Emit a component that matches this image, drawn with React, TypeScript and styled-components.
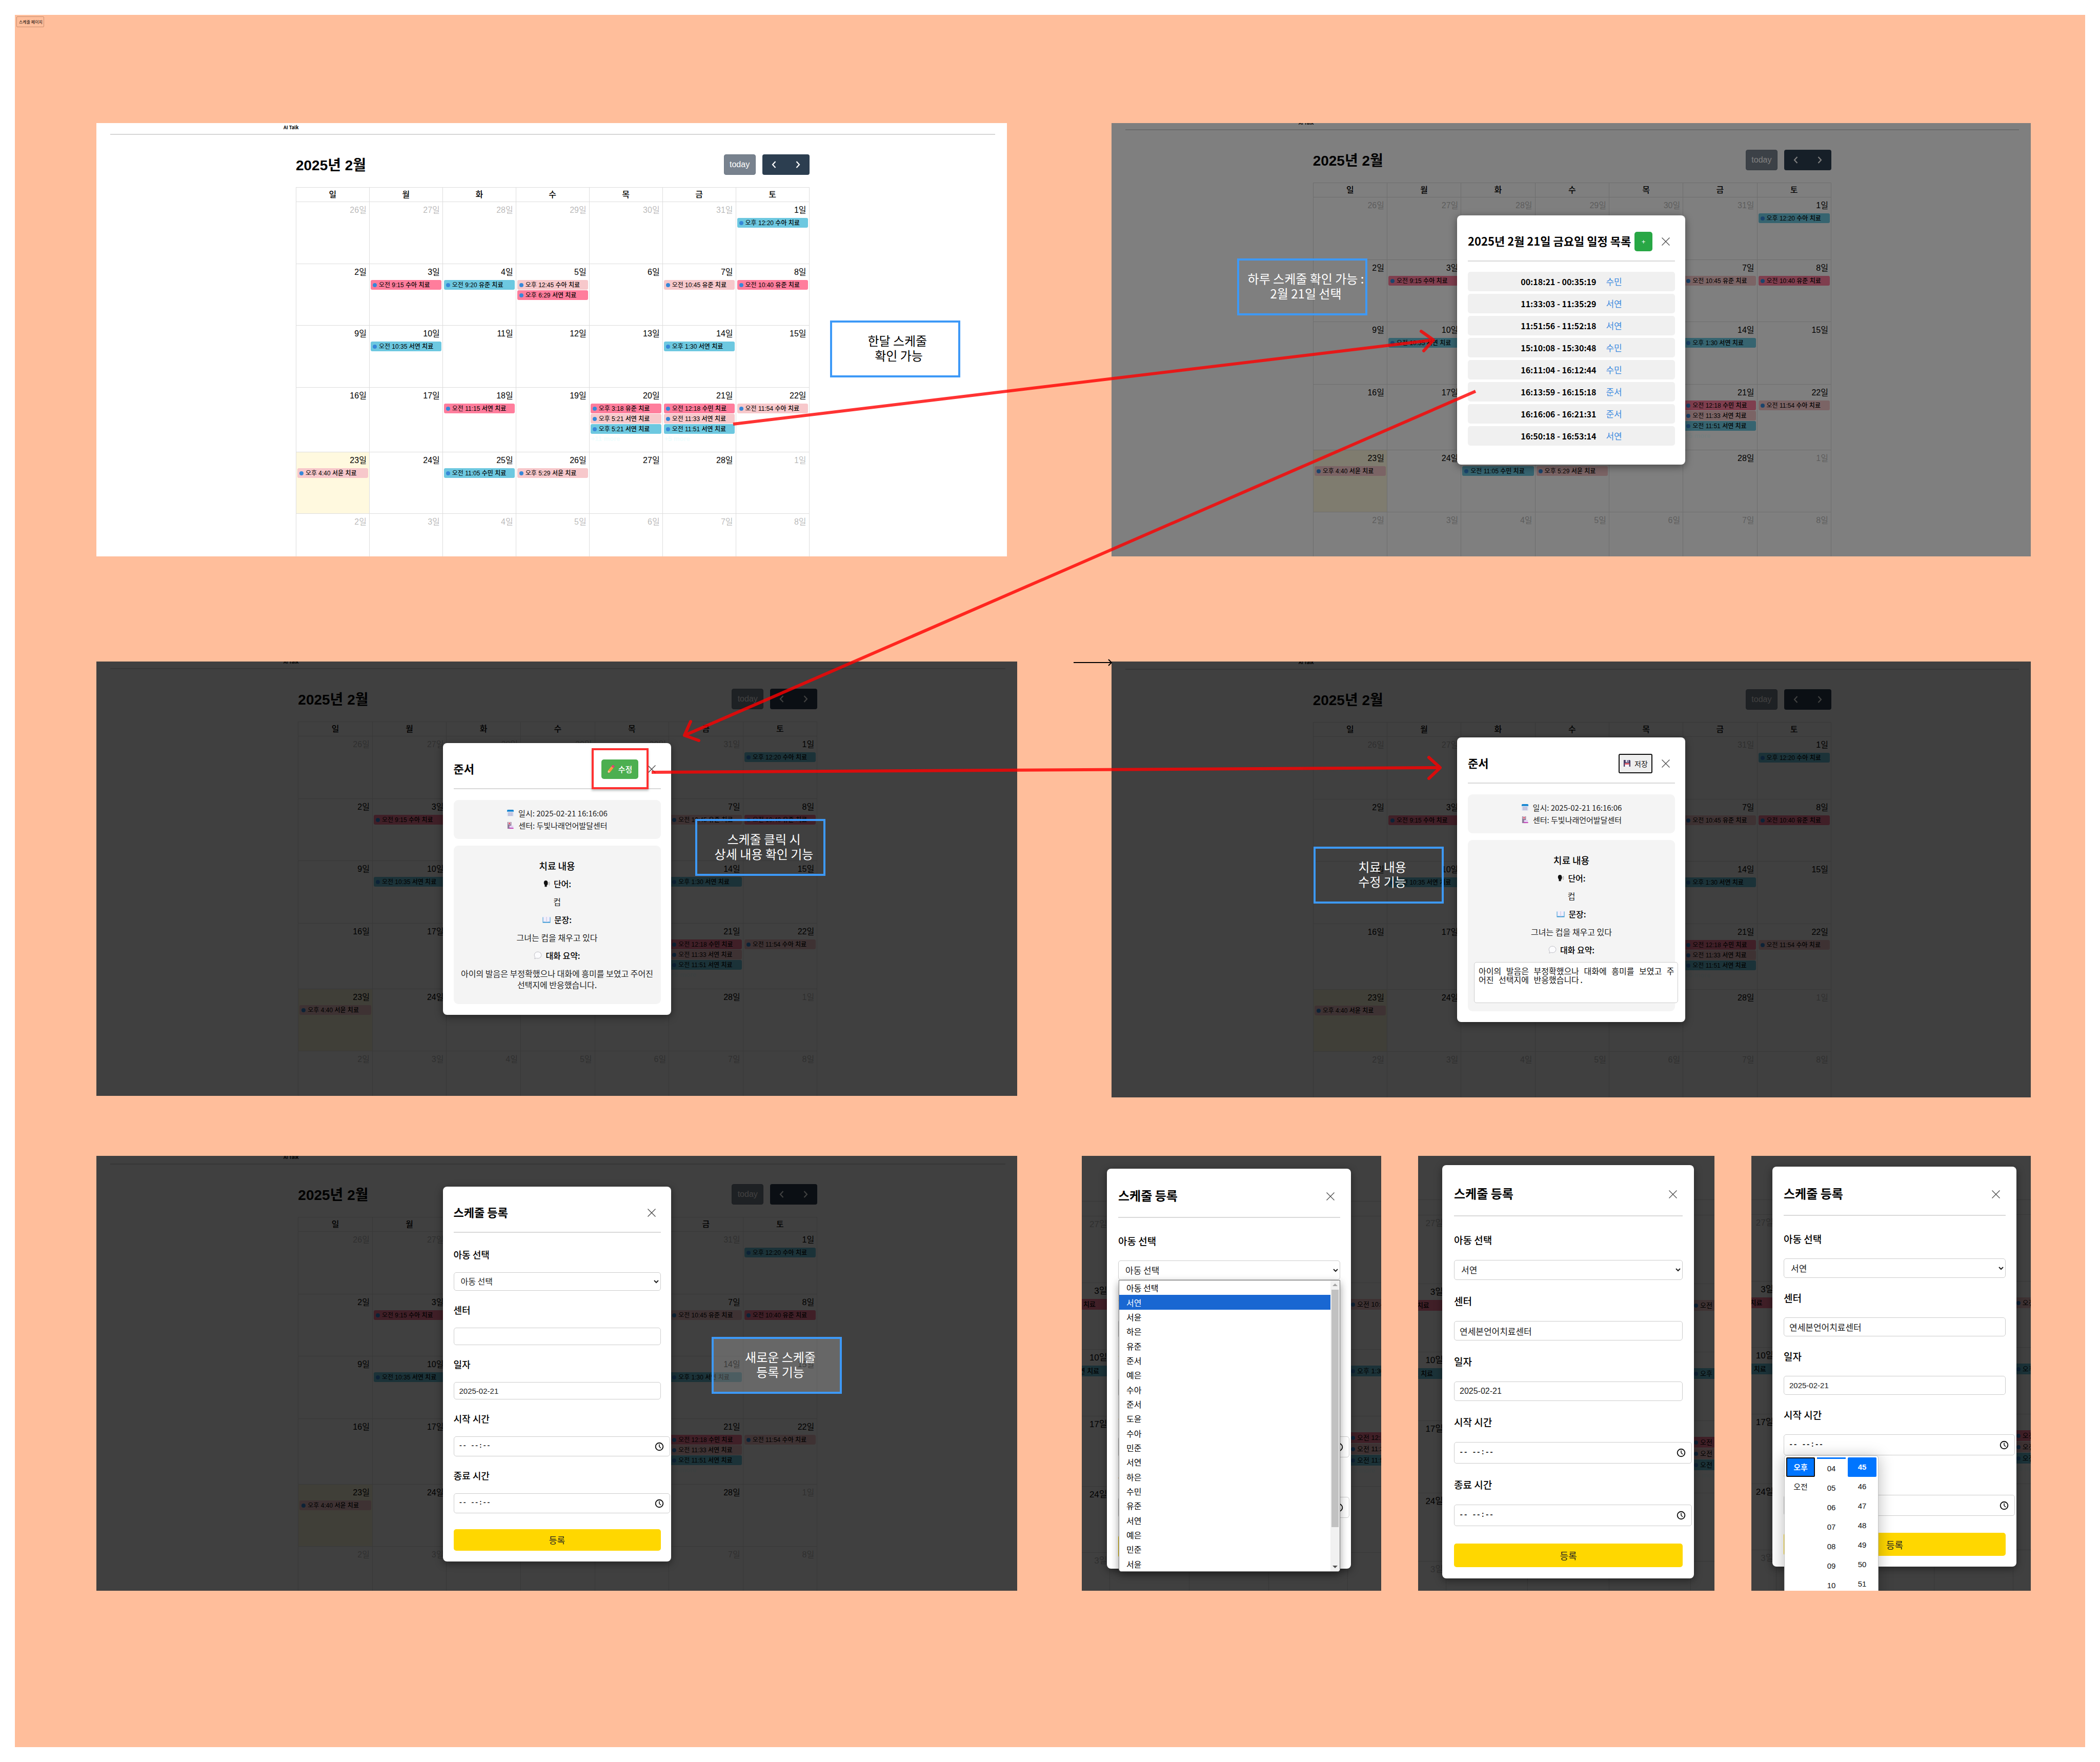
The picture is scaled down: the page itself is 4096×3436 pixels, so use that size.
import React, { useId } from "react";
import styled, { createGlobalStyle, css } from "styled-components";

const KR = `"Noto Sans CJK KR", "Noto Sans", sans-serif`;
const ARIAL = `"Liberation Sans", "Noto Sans CJK KR", sans-serif`;
const MONO = `"Liberation Mono", "Noto Sans CJK KR", monospace`;

const GlobalStyle = createGlobalStyle`
  *, *::before, *::after { box-sizing: border-box; }
  body { margin: 0; background: #fff; color: #000; font-family: ${KR}; }
  button, input, select, textarea { font-family: inherit; margin: 0; }
`;

/* ---------- board ---------- */

const Page = styled.div`
  position: relative;
  padding: 29px;
`;

const Board = styled.main`
  background: #ffbe9b;
  padding: 3px 0 0 3px;
`;

const BoardTag = styled.div`
  width: fit-content;
  height: 21px;
  padding: 0 2px 0 4px;
  border: 1px solid rgba(60, 20, 0, 0.28);
  border-radius: 2px;
  font-size: 8px;
  line-height: 19px;
`;

const Rows = styled.div`
  padding: 187px 106px 305px 156px;
`;

const Row = styled.section<{ $gapAfter?: number }>`
  display: flex;
  align-items: flex-start;
  margin-bottom: ${(p) => p.$gapAfter ?? 0}px;
`;

const Panel = styled.article<{ $grow: number; $height: number; $before?: number }>`
  position: relative;
  flex: ${(p) => p.$grow} 1 0;
  min-width: 0;
  height: ${(p) => p.$height}px;
  margin-left: ${(p) => p.$before ?? 0}px;
  overflow: hidden;
  background: #fff;
`;

const Overlay = styled.div<{ $dim: number; $pad?: string; $start?: boolean }>`
  position: absolute;
  inset: 0;
  display: flex;
  align-items: ${(p) => (p.$start ? "flex-start" : "center")};
  justify-content: ${(p) => (p.$start ? "flex-start" : "center")};
  padding: ${(p) => p.$pad ?? "0"};
  background: rgba(0, 0, 0, ${(p) => p.$dim});
`;

const Note = styled.p<{ $x: number; $y: number; $ink: string; $fill?: string }>`
  position: absolute;
  left: ${(p) => p.$x}px;
  top: ${(p) => p.$y}px;
  display: grid;
  place-content: center;
  width: 254px;
  height: 111px;
  margin: 0;
  padding: 0 0 6px 14px;
  border: 4px solid #3d99f7;
  background: ${(p) => p.$fill ?? "transparent"};
  color: ${(p) => p.$ink};
  font-size: 24px;
  line-height: 29px;
  text-align: center;
  white-space: pre;
`;

const Arrows = styled.svg`
  position: absolute;
  left: 0;
  top: 0;
  width: 100%;
  height: auto;
  pointer-events: none;
`;

/* ---------- calendar ---------- */

type Scale = {
  head: number;
  rows: number[];
  chip: number;
  day: number;
  text: number;
  width: string;
  left: string;
};

const LAST = 140;
const wide = { day: 16, text: 12, width: "56.4%", left: "21.9%", chip: 19 };
const BASE: Scale = { ...wide, head: 28, rows: [121, 120, 121, 126, 120, LAST] };
const DIM: Scale = { ...wide, head: 28, rows: [122, 121, 122, 128, 121, LAST] };
const CROP_A: Scale = { head: 29, rows: [130, 130, 130, 137, 129, LAST], chip: 21, day: 17, text: 13, width: "185.4%", left: "-43.6%" };
const CROP_B: Scale = { head: 30, rows: [134, 133, 134, 141, 133, LAST], chip: 21, day: 17, text: 13, width: "192.8%", left: "-45.7%" };
const CROP_C: Scale = { head: 29, rows: [130, 129, 130, 136, 129, LAST], chip: 21, day: 17, text: 13, width: "197.8%", left: "-47.6%" };

const Screen = styled.div<{ $shift: number }>`
  margin-top: ${(p) => -p.$shift}px;
`;

const AppBar = styled.header`
  height: 23px;
  margin: 0 23px 0 27px;
  padding: 4px 0 0 338px;
  border-bottom: 2px solid #d6d6d6;
  font-size: 9px;
  font-weight: 700;
  line-height: 10px;
`;

const Toolbar = styled.div`
  display: flex;
  align-items: center;
  width: 56.4%;
  margin: 38px 0 24px 21.9%;
  font-family: ${ARIAL};
`;

const Month = styled.h2`
  flex: 1;
  margin: 0;
  padding-top: 3px;
  font-size: 28px;
  font-weight: 700;
  line-height: 37px;
`;

const TodayButton = styled.button`
  width: 62px;
  height: 40px;
  margin-right: 13px;
  padding: 0;
  border: 1px solid #6b7682;
  border-radius: 4px;
  background: #78828e;
  color: #fff;
  font-size: 16px;
`;

const NavGroup = styled.div`
  display: flex;
  width: 92px;
  height: 40px;
  overflow: hidden;
  border-radius: 4px;
  background: #2c3e50;
`;

const NavButton = styled.button`
  flex: 1;
  display: grid;
  place-items: center;
  padding: 0;
  border: 0;
  background: transparent;
`;

const Grid = styled.table<{ $s: Scale }>`
  table-layout: fixed;
  border-collapse: collapse;
  width: ${(p) => p.$s.width};
  margin-left: ${(p) => p.$s.left};
  font-family: ${ARIAL};
  font-size: ${(p) => p.$s.day}px;

  th, td { border: 1px solid #ddd; padding: 0; }
  th { height: ${(p) => p.$s.head}px; font-weight: 500; line-height: 20px; }
`;

const Week = styled.tr<{ $h: number }>`
  height: ${(p) => p.$h}px;
`;

const Day = styled.td<{ $today: boolean }>`
  vertical-align: top;
  background: ${(p) => (p.$today ? "#fff9df" : "transparent")};
`;

const DayNumber = styled.div<{ $muted: boolean }>`
  height: 31px;
  padding-right: 5px;
  line-height: 32px;
  text-align: right;
  color: ${(p) => (p.$muted ? "rgba(0, 0, 0, 0.3)" : "#000")};
`;

const TONES = { blue: "#6dc8e0", pink: "#ff7d9c", light: "#f7c8cb" };
type Tone = keyof typeof TONES;

const Chip = styled.div<{ $tone: Tone; $s: Scale }>`
  display: flex;
  align-items: center;
  height: ${(p) => p.$s.chip}px;
  margin: 0 2px 1px;
  padding-left: 4px;
  overflow: hidden;
  border-radius: 3px;
  background: ${(p) => TONES[p.$tone]};
  font-size: ${(p) => p.$s.text}px;
  line-height: 18px;
  white-space: pre;

  strong { font-weight: 500; }

  &::before {
    content: "";
    flex: none;
    width: 8px;
    height: 8px;
    margin-right: 4px;
    border-radius: 50%;
    background: #3788d8;
  }
`;

const More = styled.div`
  padding-left: 3px;
  color: #effefe;
  font-size: 13px;
  font-weight: 700;
  line-height: 18px;
`;

type Event = [Tone, string, string];
type DayData = { n: number; muted?: boolean; today?: boolean; events?: Event[]; more?: string };

const days = (from: number, to: number, muted = false): DayData[] =>
  Array.from({ length: to - from + 1 }, (_, i) => ({ n: from + i, muted }));

const EVENTS: Record<number, Event[]> = {
  1: [["blue", "오후 12:20", "수아 치료"]],
  3: [["pink", "오전 9:15", "수아 치료"]],
  4: [["blue", "오전 9:20", "유준 치료"]],
  5: [["light", "오후 12:45", "수아 치료"], ["pink", "오후 6:29", "서연 치료"]],
  7: [["light", "오전 10:45", "유준 치료"]],
  8: [["pink", "오전 10:40", "유준 치료"]],
  10: [["blue", "오전 10:35", "서연 치료"]],
  14: [["blue", "오후 1:30", "서연 치료"]],
  18: [["pink", "오전 11:15", "서연 치료"]],
  20: [["pink", "오후 3:18", "유준 치료"], ["light", "오후 5:21", "서연 치료"], ["blue", "오후 5:21", "서연 치료"]],
  21: [["pink", "오전 12:18", "수민 치료"], ["light", "오전 11:33", "서연 치료"], ["blue", "오전 11:51", "서연 치료"]],
  22: [["light", "오전 11:54", "수아 치료"]],
  23: [["light", "오후 4:40", "서윤 치료"]],
  25: [["blue", "오전 11:05", "수민 치료"]],
  26: [["light", "오후 5:29", "서윤 치료"]],
};
const MORE: Record<number, string> = { 20: "+11 more", 21: "+5 more" };

const FEBRUARY = days(1, 28).map((d) => ({ ...d, today: d.n === 23, events: EVENTS[d.n], more: MORE[d.n] }));
const ALL: DayData[] = [...days(26, 31, true), ...FEBRUARY, ...days(1, 8, true)];
const WEEKS = [0, 1, 2, 3, 4, 5].map((w) => ALL.slice(w * 7, w * 7 + 7));

function Calendar({ s }: { s: Scale }) {
  return (
    <Grid $s={s}>
      <thead>
        <tr>
          {["일", "월", "화", "수", "목", "금", "토"].map((d) => (
            <th key={d}>{d}</th>
          ))}
        </tr>
      </thead>
      <tbody>
        {WEEKS.map((week, i) => (
          <Week key={i} $h={s.rows[i]}>
            {week.map((d) => (
              <Day key={d.n} $today={!!d.today}>
                <DayNumber $muted={!!d.muted}>{d.n}일</DayNumber>
                {d.events?.map(([tone, time, name]) => (
                  <Chip key={time + name + tone} $tone={tone} $s={s}>
                    {time} <strong>{name}</strong>
                  </Chip>
                ))}
                {d.more && <More>{d.more}</More>}
              </Day>
            ))}
          </Week>
        ))}
      </tbody>
    </Grid>
  );
}

function Chevron({ d }: { d: string }) {
  return (
    <svg width="16" height="16" viewBox="0 0 16 16" fill="none" stroke="#fff" strokeWidth="2.2">
      <path d={d} />
    </svg>
  );
}

function SchedulePage({ s, shift = 0 }: { s: Scale; shift?: number }) {
  return (
    <Screen $shift={shift}>
      <AppBar>AI Talk</AppBar>
      <Toolbar>
        <Month>2025년 2월</Month>
        <TodayButton>today</TodayButton>
        <NavGroup>
          <NavButton aria-label="prev"><Chevron d="M10.5 2 5 8l5.500 6" /></NavButton>
          <NavButton aria-label="next"><Chevron d="M5.500 2 11 8l-5.500 6" /></NavButton>
        </NavGroup>
      </Toolbar>
      <Calendar s={s} />
    </Screen>
  );
}

const Cropped = styled.div<{ $top: number }>`
  padding-top: ${(p) => p.$top}px;
`;

/* ---------- modal ---------- */

type Size = "sm" | "md" | "lg";
const SIZES = {
  sm: { width: 445, pad: 20, top: 14, head: 76, title: 22, label: 18, labelH: 26, first: 29, under: 22, after: 24, select: 36, input: 34, time: 39, btnGap: 31, btn: 42, text: 16, date: 15, mono: 13, name: 17, bottom: 21, close: 36 },
  md: { width: 476, pad: 21, top: 13, head: 83, title: 24, label: 19, labelH: 27, first: 31, under: 25, after: 25, select: 38, input: 37, time: 41, btnGap: 33, btn: 45, text: 17, date: 15, mono: 14, name: 18, bottom: 21, close: 38 },
  lg: { width: 491, pad: 22, top: 15, head: 85, title: 24, label: 19, labelH: 28, first: 32, under: 25, after: 27, select: 39, input: 38, time: 42, btnGap: 34, btn: 46, text: 17, date: 16, mono: 14, name: 18, bottom: 22, close: 38 },
};

const Modal = styled.section<{ $size: Size }>`
  flex: none;
  width: ${(p) => SIZES[p.$size].width}px;
  padding: ${(p) => `${SIZES[p.$size].top}px ${SIZES[p.$size].pad}px ${SIZES[p.$size].bottom}px ${SIZES[p.$size].pad + 1}px`};
  border-radius: 8px;
  background: #fff;
  box-shadow: 0 4px 16px rgba(0, 0, 0, 0.45);
`;

const ModalHead = styled.header<{ $size: Size }>`
  display: flex;
  align-items: center;
  height: ${(p) => SIZES[p.$size].head}px;
  border-bottom: 2px solid #d9d9d9;
`;

const ModalTitle = styled.h3<{ $size: Size }>`
  flex: 1;
  margin: 0;
  padding-bottom: 4px;
  font-size: ${(p) => SIZES[p.$size].title}px;
  font-weight: 700;
  line-height: 30px;
  white-space: nowrap;
`;

const CloseButton = styled.button<{ $size: Size }>`
  display: grid;
  place-items: center;
  width: ${(p) => SIZES[p.$size].close}px;
  height: 36px;
  padding: 0;
  border: 0;
  background: transparent;
`;

const actionButton = css`
  display: flex;
  align-items: center;
  justify-content: center;
  height: 38px;
  margin-right: 8px;
  padding: 0;
  line-height: 20px;
`;

const AddButton = styled.button`
  ${actionButton}
  width: 35px;
  border: 0;
  border-radius: 5px;
  background: #28a745;
  color: #fff;
  font-size: 13px;
`;

const EditButton = styled.button`
  ${actionButton}
  gap: 7px;
  width: 72px;
  border: 0;
  border-radius: 5px;
  background: #4caf50;
  color: #fff;
  font-size: 15px;
  font-weight: 500;
`;

const SaveButton = styled.button`
  ${actionButton}
  gap: 7px;
  width: 66px;
  border: 2px solid #101010;
  border-radius: 3px;
  background: #efefef;
  color: #111;
  font-size: 14px;
`;

const Focus = styled.div`
  position: relative;

  &::after {
    content: "";
    position: absolute;
    inset: -22px -12px -20px -19px;
    border: 4px solid #ff3131;
    box-shadow: 0 3px 4px rgba(0, 0, 0, 0.25);
  }
`;

function ModalHeader({ title, size = "sm", children }: { title: string; size?: Size; children?: React.ReactNode }) {
  return (
    <ModalHead $size={size}>
      <ModalTitle $size={size}>{title}</ModalTitle>
      {children}
      <CloseButton $size={size} aria-label="닫기">
        <svg width="18" height="18" viewBox="0 0 18 18" stroke="#4a4a4a" strokeWidth="1.300">
          <path d="M1.500 1.500l15 15M16.500 1.500l-15 15" />
        </svg>
      </CloseButton>
    </ModalHead>
  );
}

const SlotList = styled.ul`
  display: grid;
  gap: 5px;
  margin: 20px 0 16px;
  padding: 0;
  list-style: none;
`;

const Slot = styled.li`
  display: flex;
  align-items: center;
  justify-content: center;
  gap: 19px;
  height: 38px;
  border-radius: 5px;
  background: #f0f0f0;
  font-size: 16px;
  line-height: 24px;
`;

const SlotName = styled.a`
  color: #3d8bdf;
  font-size: 17px;
  text-decoration: none;
`;

const SLOTS = [
  ["00:18:21 - 00:35:19", "수민"],
  ["11:33:03 - 11:35:29", "서연"],
  ["11:51:56 - 11:52:18", "서연"],
  ["15:10:08 - 15:30:48", "수민"],
  ["16:11:04 - 16:12:44", "수민"],
  ["16:13:59 - 16:15:18", "준서"],
  ["16:16:06 - 16:21:31", "준서"],
  ["16:50:18 - 16:53:14", "서연"],
];

/* ---------- detail modal ---------- */

const InfoBox = styled.div`
  margin-top: 21px;
  padding: 14px 12px;
  border-radius: 9px;
  background: #f4f4f4;
`;

const InfoLine = styled.p`
  display: flex;
  align-items: center;
  justify-content: center;
  gap: 8px;
  margin: 0;
  color: #222;
  font-size: 15px;
  line-height: 24px;
`;

const DetailBox = styled.div`
  display: flex;
  flex-direction: column;
  gap: 13px;
  margin-top: 13px;
  padding: 28px 12px 27px;
  border-radius: 9px;
  background: #f4f4f4;
  text-align: center;
`;

const DetailTitle = styled.h4`
  margin: 0;
  font-size: 18px;
  font-weight: 500;
  line-height: 22px;
`;

const DetailLabel = styled.div`
  display: flex;
  align-items: center;
  justify-content: center;
  gap: 7px;
  font-size: 16px;
  font-weight: 500;
  line-height: 22px;
`;

const DetailText = styled.p`
  margin: 0;
  color: #222;
  font-size: 16px;
  line-height: 22px;
`;

const Summary = styled.textarea`
  box-sizing: content-box;
  display: block;
  width: 100%;
  height: 58px;
  margin-bottom: -11px;
  padding: 11px 8px 9px;
  resize: none;
  overflow: hidden;
  border: 1px solid #ccc;
  border-radius: 5px;
  background: #fff;
  color: #111;
  font-family: ${MONO};
  font-size: 16px;
  line-height: 17px;
  white-space: pre;
`;

function CalendarEmoji() {
  return (
    <svg width="15" height="15" viewBox="0 0 16 16">
      <rect x="1" y="1" width="14" height="14" rx="2" fill="#dfe6f2" />
      <path d="M1 5V3a2 2 0 0 1 2-2h10a2 2 0 0 1 2 2v2z" fill="#1585d0" />
      <g fill="#8b7fb8">
        {[7, 9.5, 12].map((y) => [3.500, 6, 8.500, 11].map((x) => <rect key={`${x}-${y}`} x={x} y={y} width="1.400" height="1.400" />))}
      </g>
    </svg>
  );
}

function HospitalEmoji() {
  return (
    <svg width="15" height="15" viewBox="0 0 16 16">
      <rect x="2" y="1" width="8" height="14" fill="#8d7a99" />
      <rect x="3.500" y="1.500" width="5" height="4.500" fill="#f6dfe6" />
      <path d="M6 2v3.500M4.300 3.800h3.500" stroke="#e0324b" strokeWidth="1.200" />
      <rect x="6" y="8.500" width="8" height="5" fill="#e3d3f4" />
      <rect x="5" y="13" width="9.500" height="2" fill="#c23fb4" />
    </svg>
  );
}

function SpeakingEmoji() {
  return (
    <svg width="14" height="14" viewBox="0 0 16 16">
      <path d="M2 6c0-3 2-4.800 4.500-4.800S10.500 3 10.500 5l.9 2.500-.9.6v2.200c0 .8-.6 1.200-1.800 1.200v3.500H4V11C2.700 9.900 2 8 2 6z" fill="#111" />
      <path d="M12.500 6l2.500-1.500M12.800 8h2.700M12.500 10l2.500 1.500" stroke="#666" strokeWidth="1" />
    </svg>
  );
}

function BookEmoji() {
  return (
    <svg width="16" height="16" viewBox="0 0 16 16">
      <path d="M.5 3.500h15v11H.5z" fill="#2f93d3" />
      <path d="M1.500 2.500Q5 1.500 8 3v10Q5 12 1.500 12.800zM14.500 2.500Q11 1.500 8 3v10q3-1 6.500-.2z" fill="#f1eefb" />
      <path d="M8 3v10" stroke="#b9b4d6" strokeWidth=".8" />
    </svg>
  );
}

function BubbleEmoji() {
  return (
    <svg width="16" height="16" viewBox="0 0 16 16">
      <path d="M8 1.200c4 0 6.800 2.800 6.800 6.300S12 13.800 8 13.800c-1 0-1.900-.2-2.700-.5L1.800 14.800l.8-3.300C1.700 10.400 1.200 9 1.200 7.500c0-3.500 2.800-6.300 6.800-6.300z" fill="#fbfbfd" stroke="#bdbdc4" strokeWidth="1" />
    </svg>
  );
}

function PencilEmoji() {
  return (
    <svg width="15" height="18" viewBox="0 0 15 18">
      <path d="M1 17l1.200-5.500L8.500 3.500l4 3-6.300 8z" fill="#ff9b3d" />
      <path d="M8.500 3.500L10.300 1.200q1-.9 2.300 0l1.500 1.200q1 1 .2 2.100L12.500 6.500z" fill="#ec3d74" />
      <path d="M1 17l1.200-5.500 4 3z" fill="#ffd0a3" />
      <path d="M1 17l.5-2 1.500 1.100z" fill="#40324a" />
    </svg>
  );
}

function FloppyEmoji() {
  return (
    <svg width="15" height="15" viewBox="0 0 16 16">
      <path d="M1 1h12.500L15 2.500V15H1z" fill="#463a63" />
      <rect x="5" y="1" width="6.500" height="5" fill="#d9d6e6" />
      <rect x="8.600" y="1.800" width="1.800" height="3.200" fill="#463a63" />
      <rect x="3.500" y="8" width="9" height="7" fill="#f4f1fa" />
      <rect x="3.500" y="8" width="9" height="2.500" fill="#f0505a" />
    </svg>
  );
}

function DetailModal({ editing }: { editing?: boolean }) {
  const id = useId();
  return (
    <Modal $size="sm">
      <ModalHeader title="준서">
        {editing ? (
          <SaveButton><FloppyEmoji />저장</SaveButton>
        ) : (
          <Focus><EditButton><PencilEmoji />수정</EditButton></Focus>
        )}
      </ModalHeader>
      <InfoBox>
        <InfoLine><CalendarEmoji />일시: 2025-02-21 16:16:06</InfoLine>
        <InfoLine><HospitalEmoji />센터: 두빛나래언어발달센터</InfoLine>
      </InfoBox>
      <DetailBox>
        <DetailTitle>치료 내용</DetailTitle>
        <DetailLabel><SpeakingEmoji />단어:</DetailLabel>
        <DetailText>컵</DetailText>
        <DetailLabel><BookEmoji />문장:</DetailLabel>
        <DetailText>그녀는 컵을 채우고 있다</DetailText>
        {editing ? (
          <>
            <DetailLabel as="label" htmlFor={id}><BubbleEmoji />대화 요약:</DetailLabel>
            <Summary id={id} defaultValue={"아이의 발음은 부정확했으나 대화에 흥미를 보였고 주\n어진 선택지에 반응했습니다."} />
          </>
        ) : (
          <>
            <DetailLabel><BubbleEmoji />대화 요약:</DetailLabel>
            <DetailText>아이의 발음은 부정확했으나 대화에 흥미를 보였고 주어진 선택지에 반응했습니다.</DetailText>
          </>
        )}
      </DetailBox>
    </Modal>
  );
}

/* ---------- schedule form ---------- */

const Field = styled.div<{ $size: Size; $first?: boolean }>`
  position: relative;
  padding-top: ${(p) => (p.$first ? SIZES[p.$size].first : SIZES[p.$size].after)}px;
`;

const Label = styled.label<{ $size: Size }>`
  display: block;
  margin-bottom: ${(p) => SIZES[p.$size].under}px;
  font-size: ${(p) => SIZES[p.$size].label}px;
  font-weight: 500;
  line-height: ${(p) => SIZES[p.$size].labelH}px;
`;

const box = css`
  display: block;
  width: 100%;
  border: 1px solid #ccc;
  border-radius: 5px;
  background: #fff;
  color: #1c1c1c;
`;

const Select = styled.select<{ $size: Size }>`
  ${box}
  height: ${(p) => SIZES[p.$size].select}px;
  padding: 0 4px 2px 9px;
  font-size: ${(p) => SIZES[p.$size].text}px;
`;

const Input = styled.input<{ $size: Size; $latin?: boolean }>`
  ${box}
  height: ${(p) => SIZES[p.$size].input}px;
  padding: 0 10px;
  font-family: ${(p) => (p.$latin ? ARIAL : KR)};
  font-size: ${(p) => (p.$latin ? SIZES[p.$size].date : SIZES[p.$size].text)}px;
`;

const TimeWrap = styled.div`
  position: relative;
  width: calc(100% + 18px);
`;

const TimeInput = styled.input<{ $size: Size }>`
  ${box}
  height: ${(p) => SIZES[p.$size].time}px;
  padding: 0 36px 2px 9px;
  font-family: ${MONO};
  font-size: ${(p) => SIZES[p.$size].mono}px;
  font-weight: 700;
`;

const ClockButton = styled.button`
  position: absolute;
  right: 12px;
  top: 0;
  bottom: 0;
  display: grid;
  place-items: center;
  padding: 0;
  border: 0;
  background: transparent;
`;

const Submit = styled.button<{ $size: Size }>`
  display: block;
  width: 100%;
  height: ${(p) => SIZES[p.$size].btn}px;
  margin-top: ${(p) => SIZES[p.$size].btnGap}px;
  padding: 0;
  border: 0;
  border-radius: 5px;
  background: #ffd700;
  color: #222;
  font-size: ${(p) => SIZES[p.$size].name}px;
  line-height: 26px;
`;

const Menu = styled.div`
  position: absolute;
  left: 1px;
  right: 0;
  top: 100%;
  z-index: 2;
  display: flex;
  height: 569px;
  border: 1px solid #767676;
  border-radius: 0 0 5px 5px;
  overflow: hidden;
  background: #fff;
  box-shadow: 0 6px 16px rgba(0, 0, 0, 0.4);
`;

const Options = styled.ul`
  flex: 1;
  display: flex;
  flex-direction: column;
  margin: 0;
  padding: 0;
  list-style: none;
`;

const Option = styled.li<{ $on: boolean }>`
  flex: 1;
  display: flex;
  align-items: center;
  min-height: 0;
  padding-left: 14px;
  background: ${(p) => (p.$on ? "#1967d2" : "transparent")};
  color: ${(p) => (p.$on ? "#fff" : "#000")};
  font-size: 16px;
  line-height: 20px;
`;

const ScrollTrack = styled.div`
  display: flex;
  flex-direction: column;
  align-items: center;
  justify-content: space-between;
  width: 18px;
  padding: 4px 0;
  background: #f1f1f1;
`;

const ScrollThumb = styled.div`
  width: 14px;
  height: 463px;
  margin: 6px 0 auto;
  background: #c1c1c1;
`;

const Picker = styled.div`
  position: absolute;
  left: 1px;
  top: 100%;
  z-index: 2;
  display: grid;
  grid-template-columns: repeat(3, 56px);
  gap: 4px;
  width: 184px;
  height: 300px;
  padding: 3px;
  border: 1px solid #c4c4c4;
  border-radius: 5px;
  background: #fff;
  box-shadow: 0 4px 30px rgba(0, 0, 0, 0.28);
`;

const PickerColumn = styled.div<{ $scrolled?: boolean }>`
  ${(p) => p.$scrolled && "border-top: 3px solid #0075ff;"}
`;

const PickerItem = styled.button<{ $on?: boolean; $ring?: boolean; $latin?: boolean }>`
  display: block;
  width: 56px;
  height: 38px;
  padding: 0;
  border: 2px solid ${(p) => (p.$ring ? "#101010" : "transparent")};
  border-radius: 2px;
  background: ${(p) => (p.$on ? "#0075ff" : "transparent")};
  background-clip: ${(p) => (p.$ring ? "padding-box" : "border-box")};
  color: ${(p) => (p.$on ? "#fff" : "#111")};
  font-family: ${(p) => (p.$latin ? ARIAL : KR)};
  font-size: 15px;
  font-weight: ${(p) => (p.$on ? 700 : 400)};
  line-height: 30px;
`;

function Clock() {
  return (
    <svg width="18" height="18" viewBox="0 0 18 18" fill="none" stroke="#111" strokeWidth="1.900">
      <circle cx="9" cy="9" r="7.300" />
      <path d="M9 4.500V9l3 3" strokeWidth="1.600" />
    </svg>
  );
}

const NAMES = ["아동 선택", "서연", "서윤", "하은", "유준", "준서", "예은", "수아", "준서", "도윤", "수아", "민준", "서연", "하은", "수민", "유준", "서연", "예은", "민준", "서윤"];

function ChildMenu() {
  return (
    <Menu>
      <Options role="listbox" aria-label="아동 선택">
        {NAMES.map((n, i) => (
          <Option key={i} role="option" aria-selected={i === 1} $on={i === 1}>{n}</Option>
        ))}
      </Options>
      <ScrollTrack>
        <svg width="10" height="8" viewBox="0 0 10 8"><path d="M0 7l5-5 5 5z" fill="#a3a3a3" /></svg>
        <ScrollThumb />
        <svg width="10" height="8" viewBox="0 0 10 8"><path d="M0 1l5 5 5-5z" fill="#505050" /></svg>
      </ScrollTrack>
    </Menu>
  );
}

function TimePicker() {
  return (
    <Picker>
      <PickerColumn>
        <PickerItem $on $ring>오후</PickerItem>
        <PickerItem>오전</PickerItem>
      </PickerColumn>
      <PickerColumn $scrolled>
        {["04", "05", "06", "07", "08", "09", "10"].map((h) => <PickerItem key={h} $latin>{h}</PickerItem>)}
      </PickerColumn>
      <PickerColumn>
        {["45", "46", "47", "48", "49", "50", "51"].map((m, i) => <PickerItem key={m} $latin $on={i === 0}>{m}</PickerItem>)}
      </PickerColumn>
    </Picker>
  );
}

function TimeField({ size, label, picker }: { size: Size; label: string; picker?: boolean }) {
  const id = useId();
  return (
    <Field $size={size}>
      <Label $size={size} htmlFor={id}>{label}</Label>
      <TimeWrap>
        <TimeInput $size={size} id={id} defaultValue="-- --:--" />
        <ClockButton type="button" aria-label={label}><Clock /></ClockButton>
      </TimeWrap>
      {picker && <TimePicker />}
    </Field>
  );
}

type FormProps = { size: Size; child: string; center?: string; menu?: boolean; picker?: boolean };

function FormModal({ size, child, center = "", menu, picker }: FormProps) {
  const id = useId();
  return (
    <Modal $size={size}>
      <ModalHeader title="스케줄 등록" size={size} />
      <form>
        <Field $size={size} $first>
          <Label $size={size} htmlFor={`${id}-child`}>아동 선택</Label>
          <Select $size={size} id={`${id}-child`} defaultValue={child}>
            <option>{child}</option>
          </Select>
          {menu && <ChildMenu />}
        </Field>
        <Field $size={size}>
          <Label $size={size} htmlFor={`${id}-center`}>센터</Label>
          <Input $size={size} id={`${id}-center`} defaultValue={center} />
        </Field>
        <Field $size={size}>
          <Label $size={size} htmlFor={`${id}-date`}>일자</Label>
          <Input $size={size} $latin id={`${id}-date`} defaultValue="2025-02-21" />
        </Field>
        <TimeField size={size} label="시작 시간" picker={picker} />
        <TimeField size={size} label="종료 시간" />
        <Submit $size={size} type="button">등록</Submit>
      </form>
    </Modal>
  );
}

const GLASS = "rgba(210, 210, 210, 0.27)";

export default function App() {
  return (
    <Page>
      <GlobalStyle />
      <Board>
        <BoardTag>스케줄 페이지</BoardTag>
        <Rows>
          <Row $gapAfter={205}>
            <Panel $grow={1776} $height={845}>
              <SchedulePage s={BASE} />
              <Note $x={1431} $y={385} $ink="#000" $fill="#fff">{"한달 스케줄 \n확인 가능"}</Note>
            </Panel>
            <Panel $grow={1793} $height={845} $before={204}>
              <SchedulePage s={DIM} shift={9} />
              <Overlay $dim={0.5}>
                <Modal $size="sm">
                  <ModalHeader title="2025년 2월 21일 금요일 일정 목록">
                    <AddButton>+</AddButton>
                  </ModalHeader>
                  <SlotList>
                    {SLOTS.map(([time, name]) => (
                      <Slot key={time}>
                        <strong>{time}</strong>
                        <SlotName href="#">{name}</SlotName>
                      </Slot>
                    ))}
                  </SlotList>
                </Modal>
              </Overlay>
              <Note $x={245} $y={264} $ink="#fff">{"하루 스케줄 확인 가능 :\n2월 21일 선택"}</Note>
            </Panel>
          </Row>

          <Row $gapAfter={114}>
            <Panel $grow={1796} $height={847}>
              <SchedulePage s={DIM} shift={8} />
              <Overlay $dim={0.75}><DetailModal /></Overlay>
              <Note $x={1168} $y={307} $ink="#fff">{"스케줄 클릭 시\n상세 내용 확인 기능"}</Note>
            </Panel>
            <Panel $grow={1793} $height={850} $before={184}>
              <SchedulePage s={DIM} shift={7} />
              <Overlay $dim={0.75}><DetailModal editing /></Overlay>
              <Note $x={394} $y={361} $ink="#fff">{"치료 내용\n수정 기능"}</Note>
            </Panel>
          </Row>

          <Row>
            <Panel $grow={1796} $height={848}>
              <SchedulePage s={DIM} shift={6} />
              <Overlay $dim={0.75} $pad="3px 0 0"><FormModal size="sm" child="아동 선택" /></Overlay>
              <Note $x={1200} $y={353} $ink="#fff" $fill={GLASS}>{"새로운 스케줄\n등록 기능"}</Note>
            </Panel>
            <Panel $grow={584} $height={848} $before={126}>
              <Cropped $top={88}><Calendar s={CROP_A} /></Cropped>
              <Overlay $dim={0.75} $start $pad="25px 0 0 49px"><FormModal size="md" child="아동 선택" menu /></Overlay>
              <Note $x={242} $y={418} $ink="#333" $fill={GLASS}>{"등록된 아동 중 \n선택 기능"}</Note>
            </Panel>
            <Panel $grow={578} $height={848} $before={72}>
              <Cropped $top={85}><Calendar s={CROP_B} /></Cropped>
              <Overlay $dim={0.75} $start $pad="18px 0 0 47px"><FormModal size="lg" child="서연" center="연세본언어치료센터" /></Overlay>
            </Panel>
            <Panel $grow={545} $height={848} $before={72}>
              <Cropped $top={85}><Calendar s={CROP_C} /></Cropped>
              <Overlay $dim={0.75} $start $pad="21px 0 0 41px"><FormModal size="md" child="서연" center="연세본언어치료센터" picker /></Overlay>
            </Panel>
          </Row>
        </Rows>
      </Board>

      <Arrows viewBox="0 0 4096 3436" fill="none" aria-hidden="true">
        <g stroke="#f00" strokeWidth="6" strokeLinejoin="round" opacity="0.8">
          <path d="M1430 827L2796 663" />
          <path d="M2772 646L2796 663L2777 684" strokeLinecap="round" />
        </g>
        <g stroke="#f00" strokeWidth="6" strokeLinejoin="round" opacity="0.8">
          <path d="M2878 763L1335 1434" />
          <path d="M1347 1407L1335 1434L1363 1444" strokeLinecap="round" />
        </g>
        <g stroke="#f00" strokeWidth="6" strokeLinejoin="round" opacity="0.8">
          <path d="M1271 1506L2809 1497" />
          <path d="M2787 1477L2809 1497L2787 1518" strokeLinecap="round" />
        </g>
        <path d="M2094 1292H2168M2162 1286L2168 1292L2162 1298" stroke="#000" strokeWidth="2" />
      </Arrows>
    </Page>
  );
}
